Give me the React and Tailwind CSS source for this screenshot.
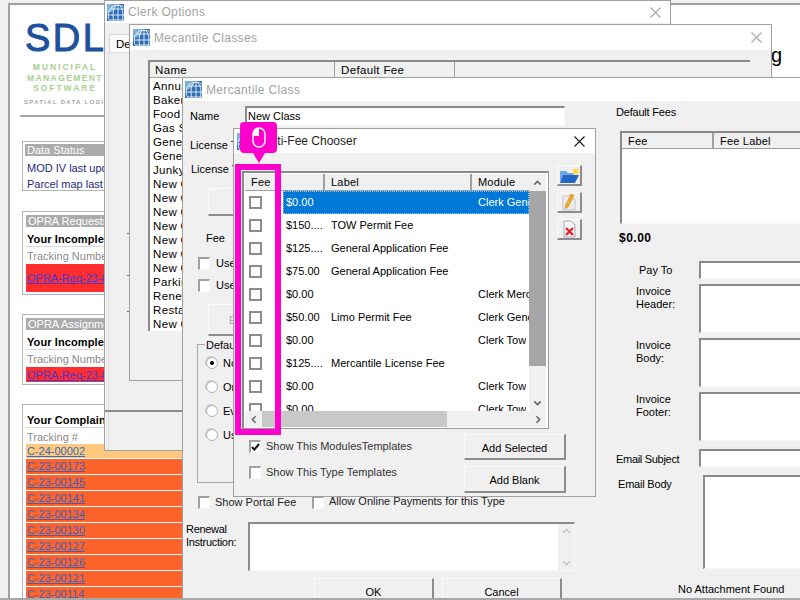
import React from "react";

const font = { fontFamily: '"Liberation Sans", Arial, sans-serif' };

const sunken = "border-t-2 border-l-2 border-t-[#8a8a8a] border-l-[#8a8a8a] border-r border-b border-r-[#f8f8f8] border-b-[#f8f8f8]";
const raised = "border-t border-l border-t-[#fafafa] border-l-[#fafafa] border-r-2 border-b-2 border-r-[#8c8c8c] border-b-[#8c8c8c] bg-[#f0f0f0]";

function Globe() {
  return (
    <svg width="17" height="17" viewBox="0 0 17 17" className="shrink-0">
      <rect width="17" height="17" fill="#2f6db5" />
      <path d="M0 17 L0 9 Q8 9 9 0 L0 0 Z" fill="#7fb0dc" />
      <g fill="none" stroke="#eaf3fb" strokeWidth="0.9">
        <circle cx="11" cy="11" r="10" />
        <ellipse cx="11" cy="11" rx="5" ry="10" />
        <path d="M1 11 H17 M3 5 H17 M3 16 H17 M11 1 V17" />
      </g>
    </svg>
  );
}

function CloseX({ color = "#a8a8a8" }) {
  return (
    <svg width="11" height="11" viewBox="0 0 11 11" className="shrink-0">
      <path d="M0.5 0.5 L10.5 10.5 M10.5 0.5 L0.5 10.5" stroke={color} strokeWidth="1.1" fill="none" />
    </svg>
  );
}

function TitleBar({ title, h, pr, pl = 3, noX, xColor, titleClass = "text-[#a3a3a3] tracking-[0.35px]" }) {
  return (
    <div className="flex items-center bg-white shrink-0" style={{ height: h, paddingRight: pr, paddingLeft: pl }}>
      <Globe />
      <span className={`ml-[4px] text-[12px] ${titleClass}`}>{title}</span>
      {!noX && <span className="ml-auto flex"><CloseX color={xColor} /></span>}
    </div>
  );
}

function Box({ checked, className = "" }) {
  return (
    <span className={`inline-flex items-center justify-center w-[12px] h-[13px] shrink-0 bg-white border-t-2 border-l-2 border-[#a0a0a0] border-r border-b border-r-[#f8f8f8] border-b-[#f8f8f8] ${className}`}>
      {checked && (
        <svg width="9" height="8" viewBox="0 0 9 8">
          <path d="M1 4 L3.4 6.6 L8 1" stroke="#111" strokeWidth="2" fill="none" />
        </svg>
      )}
    </span>
  );
}

function Radio({ on, label }) {
  return (
    <div className="flex items-center h-[24px]">
      <span className="w-[12px] h-[12px] rounded-full bg-white border border-[#b0b0b0] shadow-[-1px_-1px_0_#d0d0d0] flex items-center justify-center">
        {on && <span className="w-[4px] h-[4px] rounded-full bg-black" />}
      </span>
      <span className="ml-[5px]">{label}</span>
    </div>
  );
}

function Panel({ title, line, tracking, red, redH, className }) {
  return (
    <div className={`w-[300px] border border-[#b4b4b4] p-[3px] ${className}`}>
      <div className="bg-[#ababab] text-white h-[12px] leading-[12px] pl-[2px]">{title}</div>
      <div className="font-bold text-black h-[18px] mt-[2px] pl-[1px] border-b border-[#d8d8d8] leading-[20px] tracking-[0.1px]">{line}</div>
      <div className="text-[#8b8b8b] h-[17px] pl-[1px] leading-[18px]">{tracking}</div>
      <div className="bg-[#ff2d2d] flex items-center" style={{ height: redH }}>
        <span className="text-[#3c3cd8] underline leading-[14px] pl-[1px]">{red}</span>
      </div>
    </div>
  );
}

const complaints = ["C-23-00173", "C-23-00145", "C-23-00141", "C-23-00134", "C-23-00130", "C-23-00127", "C-23-00126", "C-23-00121", "C-23-00114"];

function LeftPage() {
  return (
    <div className="absolute left-[8px] top-[3px] w-[792px] h-[595px] bg-white border-t-2 border-l-2 border-[#a0a0a0] overflow-hidden">
      <div className="pl-[15px] pt-[14px] w-[200px]">
        <div className="text-[38px] leading-[38px] font-normal [-webkit-text-stroke:1px_#1c519e] text-[#1c519e] tracking-[2.5px] h-[38px] whitespace-nowrap">SDL</div>
        <div className="mt-[5px] flex flex-col items-center w-[80px] text-[8.5px] leading-[10.5px] text-[#a9d08f] font-bold tracking-[2px] whitespace-nowrap">
          <div>MUNICIPAL</div>
          <div className="tracking-[1.4px]">MANAGEMENT</div>
          <div>SOFTWARE</div>
        </div>
        <div className="mt-[4.5px] -ml-[1px] text-[6px] leading-[8px] text-[#a5a5a5] font-bold tracking-[1.3px] whitespace-nowrap">SPATIAL DATA LOGIC</div>
        <div className="mt-[9px] -ml-[5px] h-[2px] w-[150px] bg-[#a6a6a6]" />
      </div>
      <div className="pl-[12px] text-[11px]">
        <div className="mt-[24px] w-[300px] h-[50px] border border-[#b4b4b4] p-[2px] text-[#1c2a80]">
          <div className="bg-[#ababab] text-white h-[12px] leading-[12px] pl-[2px]">Data Status</div>
          <div className="mt-[4px] pl-[2px] leading-[16px]">MOD IV last updated</div>
          <div className="pl-[2px] leading-[16px]">Parcel map last updated</div>
        </div>
        <Panel className="mt-[20px] h-[84px]" title="OPRA Requests" line="Your Incomplete" tracking="Tracking Number" red="OPRA-Req-23-00" redH={28} />
        <Panel className="mt-[19px] h-[71px]" title="OPRA Assignments" line="Your Incomplete" tracking="Tracking Number" red="OPRA-Req-23-00" redH={15} />
        <div className="mt-[19px] w-[300px] border border-[#b4b4b4] px-[3px] pt-[6px]">
          <div className="font-bold text-black h-[17px] pl-[1px] border-b border-[#d8d8d8] leading-[18px] tracking-[0.1px]">Your Complaints</div>
          <div className="text-[#8b8b8b] h-[16px] pl-[1px] leading-[18px]">Tracking #</div>
          <div className="bg-[#ffc87c] h-[14px] leading-[14px] pl-[1px] text-[#2a6fc9] underline">C-24-00002</div>
          {complaints.map((c) => (
            <div key={c} className="bg-[#ff632c] h-[15px] mt-px leading-[15px] pl-[1px] text-[#3f5fb8] underline">{c}</div>
          ))}
        </div>
      </div>
      <div className="absolute right-[18px] top-[38px] text-[20px] leading-[24px] text-black">g</div>
    </div>
  );
}

function ClerkOptions() {
  return (
    <div className="absolute left-[104px] top-0 w-[567px] h-[451px] bg-[#f0f0f0] border border-[#a0a0a0] flex flex-col">
      <TitleBar title="Clerk Options" h={22} pr={9} pl={2} />
      <div className="ml-[4px] mt-[11px] w-[40px] h-[18px] bg-[#fafafa] border border-[#d8d8d8] border-b-0 pl-[6px] text-[11.5px] text-black leading-[18px] shrink-0">De</div>
      <div className="ml-[3px] flex-1 border-l border-t border-[#dcdcdc]">
        <div className="mt-[153px] ml-[18px] w-[3px] h-[28px] border-b border-b-[#707070]" />
        <div className="mt-[15px] ml-[18px] w-[3px] h-[27px] border-b border-b-[#707070]" />
        <div className="mt-[10px] ml-[18px] w-[3px] h-[26px] border-b border-b-[#707070]" />
        <div className="mt-[89px] -ml-[4px] h-[11px] w-[100px] border-b-2 border-b-[#8c8c8c]" />
      </div>
    </div>
  );
}

const classNames = ["Annual", "Bakery", "Food T", "Gas St", "General", "General", "Junkyard", "New C", "New C", "New C", "New C", "New C", "New C", "New C", "Parking", "Renew", "Restau", "New C"];

function MecantileClasses() {
  return (
    <div className="absolute left-[129px] top-[24px] w-[643px] h-[357px] bg-[#f0f0f0] border border-[#a0a0a0] flex flex-col">
      <TitleBar title="Mecantile Classes" h={25} pr={9} />
      <div className="ml-[18px] mt-[10px] w-[602px] h-[271px] bg-white border-t-2 border-l-2 border-[#8a8a8a] text-[11.5px] text-black">
        <div className="flex h-[16px] bg-[#f0f0f0] border-b border-[#a0a0a0] leading-[17px] tracking-[0.35px]">
          <div className="w-[185px] pl-[5px] border-r border-[#a0a0a0]">Name</div>
          <div className="w-[120px] pl-[6px] border-r border-[#a0a0a0]">Default Fee</div>
        </div>
        <div className="pl-[3px] pt-[1px] tracking-[0.35px]">
          {classNames.map((n, i) => (
            <div key={i} className="h-[14px] leading-[14px]">{n}</div>
          ))}
        </div>
      </div>
    </div>
  );
}

function FormRow({ label, h, mt, labelClass = "pl-[20px] w-[83px]" }) {
  return (
    <div className="flex" style={{ height: h, marginTop: mt }}>
      <div className={`${labelClass} shrink-0 leading-[13px] pt-[1px] whitespace-pre-line`}>{label}</div>
      <div className={`flex-1 bg-white ${sunken}`} />
    </div>
  );
}

function MercantileClass() {
  return (
    <div className="absolute left-[182px] top-[77px] w-[620px] h-[525px] bg-[#f0f0f0] border border-[#a0a0a0] flex flex-col text-[11px] text-black">
      <TitleBar title="Mercantile Class" h={23} pr={9} pl={2} noX />
      <div className="flex flex-1">
        {/* left column */}
        <div className="w-[433px] shrink-0 pl-[7px]">
          <div className="flex mt-[5px] h-[20px] items-center">
            <span className="w-[55px]">Name</span>
            <div className={`w-[320px] h-[20px] bg-white pl-[1px] leading-[16px] ${sunken}`}>New Class</div>
          </div>
          <div className="mt-[11px] h-[16px] leading-[16px]">License Type</div>
          <div className="mt-[8px] h-[16px] leading-[16px] pl-[1px]">License Year</div>
          <div className={`mt-[11px] ml-[18px] w-[120px] h-[28px] ${raised}`} />
          <div className="mt-[14px] h-[16px] leading-[16px] ml-[16px]">Fee</div>
          <div className="mt-[9px] h-[16px] flex items-center ml-[8px] gap-[6px]"><Box />Use Fee</div>
          <div className="mt-[6px] h-[16px] flex items-center ml-[8px] gap-[6px]"><Box />Use Fee</div>
          <div className={`mt-[11px] ml-[18px] w-[120px] h-[32px] pl-[20px] leading-[30px] text-[#a8a8a8] ${raised}`}>Edit</div>
          <div className="relative mt-[8px] ml-[7px] w-[380px] h-[139px] border border-[#a8a8a8] pl-[8px] pt-[6px]">
            <span className="absolute left-[7px] -top-[6px] bg-[#f0f0f0] px-px leading-[13px]">Default</span>
            <Radio on label="None" />
            <Radio label="Once" />
            <Radio label="Every" />
            <Radio label="Use" />
          </div>
          <div className="mt-[11px] h-[16px] flex items-center ml-[8px]">
            <Box /><span className="ml-[5px] w-[97px] text-[#222] whitespace-nowrap">Show Portal Fee</span>
            <Box /><span className="ml-[5px] text-[#222] -mt-[2px] whitespace-nowrap">Allow Online Payments for this Type</span>
          </div>
          <div className="mt-[12px] h-[49px] flex -ml-[4px]">
            <div className="w-[62px] pt-[1px] leading-[13px] tracking-[-0.3px]">Renewal<br />Instruction:</div>
            <div className={`w-[327px] bg-white flex ${sunken}`}>
              <div className="ml-auto w-[16px] bg-[#f0f0f0] flex flex-col items-center justify-between py-[4px]">
                <Chevron dir="up" color="#c8c8c8" />
                <Chevron dir="down" color="#c8c8c8" />
              </div>
            </div>
          </div>
          <div className="mt-[7px] flex ml-[124px] gap-[8px]">
            <div className={`w-[120px] h-[30px] text-center leading-[26px] ${raised}`}>OK</div>
            <div className={`w-[120px] h-[30px] text-center leading-[26px] ${raised}`}>Cancel</div>
          </div>
        </div>
        {/* right column */}
        <div className="flex-1 min-w-0">
          <div className="mt-[3px] h-[16px] leading-[16px] tracking-[-0.2px]">Default Fees</div>
          <div className={`mt-[11px] ml-[4px] h-[93px] bg-white ${sunken}`}>
            <div className="flex h-[16px] bg-[#f0f0f0] border-b border-[#9a9a9a] leading-[16px] tracking-[0.2px]">
              <div className="w-[92px] pl-[6px] border-r-2 border-[#a0a0a0]">Fee</div>
              <div className="pl-[6px]">Fee Label</div>
            </div>
          </div>
          <div className="mt-[6px] ml-[3px] h-[16px] leading-[16px] font-bold text-[12px] tracking-[0.5px]">$0.00</div>
          <FormRow label="Pay To" h={18} mt={15} labelClass="pl-[23px] w-[83px] leading-[16px]" />
          <FormRow label={"Invoice\nHeader:"} h={49} mt={5} />
          <FormRow label={"Invoice\nBody:"} h={49} mt={5} />
          <FormRow label={"Invoice\nFooter:"} h={49} mt={5} />
          <FormRow label="Email Subject" h={18} mt={8} labelClass="w-[83px] pt-[4px] tracking-[-0.3px]" />
          <FormRow label="Email Body" h={94} mt={8} labelClass="w-[87px] pl-[2px] pt-[3px] tracking-[-0.2px]" />
          <div className="mt-[12px] h-[16px] leading-[16px] ml-[62px] whitespace-nowrap">No Attachment Found</div>
        </div>
      </div>
    </div>
  );
}

function Chevron({ dir, color = "#666" }) {
  const d = dir === "up" ? "M1 5 L4.5 1.5 L8 5" : dir === "down" ? "M1 1.5 L4.5 5 L8 1.5" : dir === "left" ? "M5 1 L1.5 4.5 L5 8" : "M1.5 1 L5 4.5 L1.5 8";
  const vertical = dir === "up" || dir === "down";
  return (
    <svg width={vertical ? 9 : 6} height={vertical ? 6 : 9} viewBox={vertical ? "0 0 9 6.5" : "0 0 6.5 9"}>
      <path d={d} fill="none" stroke={color} strokeWidth="1.6" />
    </svg>
  );
}

const fees = [
  ["$0.00", "", "Clerk Gene"],
  ["$150....", "TOW Permit Fee", ""],
  ["$125....", "General Application Fee", ""],
  ["$75.00", "General Application Fee", ""],
  ["$0.00", "", "Clerk Merc"],
  ["$50.00", "Limo Permit Fee", "Clerk Gene"],
  ["$0.00", "", "Clerk Tow"],
  ["$125....", "Mercantile License Fee", ""],
  ["$0.00", "", "Clerk Tow"],
  ["$0.00", "", "Clerk Tow"],
];

function ToolButton({ children }) {
  return <div className={`w-[25px] h-[21px] flex items-center justify-center ${raised}`}>{children}</div>;
}

function FeeList() {
  return (
    <div className="w-[307px] h-[258px] border-t-2 border-l-2 border-[#8a8a8a] border-r border-b border-r-[#9a9a9a] border-b-[#9a9a9a] bg-white p-px flex flex-col">
      <div className="flex h-[237px] overflow-hidden">
        <div className="w-[284px] shrink-0 flex flex-col">
          <div className="flex h-[17px] shrink-0 bg-[#f0f0f0] border-b border-[#a0a0a0] leading-[17px] tracking-[0.2px]">
            <div className="w-[80px] shrink-0 pl-[6px] border-r-2 border-[#a0a0a0]">Fee</div>
            <div className="w-[147px] shrink-0 pl-[6px] border-r-2 border-[#a0a0a0]">Label</div>
            <div className="pl-[6px]">Module</div>
          </div>
          {fees.map((f, i) => (
            <div key={i} className="flex h-[23px] shrink-0 items-center">
              <div className="w-[38px] shrink-0 pl-[4px] flex">
                <span className="w-[13px] h-[13px] bg-white border-2 border-[#8c8c8c]" />
              </div>
              <div className={`flex flex-1 min-w-0 h-full items-center pl-[3px] ${i === 0 ? "bg-[#0078d7] text-white outline-1 -outline-offset-1 outline-dotted outline-[#8cc4f0]" : ""}`}>
                <span className="w-[45px] shrink-0 whitespace-nowrap">{f[0]}</span>
                <span className="w-[147px] shrink-0 whitespace-nowrap">{f[1]}</span>
                <span className="min-w-0 whitespace-nowrap overflow-hidden">{f[2]}</span>
              </div>
            </div>
          ))}
        </div>
        <div className="w-[17px] shrink-0 bg-[#f0f0f0] flex flex-col items-center">
          <div className="h-[17px] flex items-center justify-center shrink-0"><Chevron dir="up" /></div>
          <div className="w-full h-[175px] bg-[#a6a6a6] shrink-0" />
          <div className="flex-1 flex items-end pb-[5px]"><Chevron dir="down" /></div>
        </div>
      </div>
      <div className="flex h-[16px] bg-[#f0f0f0] items-center w-[301px]">
        <div className="w-[17px] flex justify-center shrink-0"><Chevron dir="left" /></div>
        <div className="w-[185px] h-full bg-[#c8c8c8] shrink-0" />
        <div className="ml-auto w-[17px] flex justify-center"><Chevron dir="right" /></div>
      </div>
    </div>
  );
}

function Chooser() {
  return (
    <div className="absolute left-[233px] top-[128px] w-[363px] h-[369px] bg-[#f0f0f0] border border-[#a0a0a0] flex flex-col text-[11px] text-black">
      <TitleBar title="Multi-Fee Chooser" h={24} pr={10} xColor="#1a1a1a" titleClass="text-[#222]" />
      <div className="flex pl-[8px] pt-[18px]">
        <FeeList />
        <div className="ml-[8px] -mt-[6px] flex flex-col gap-[6px]">
          <ToolButton>
            <svg width="21" height="17" viewBox="0 0 21 17">
              <path d="M1 4 H7 L9 6 H15 V8 H4 L1 15 Z" fill="#6ea6e6" />
              <path d="M4 8 H20 L16 16 H1 Z" fill="#2268c8" />
              <path d="M16 0 L17 2.5 L20 1.5 L18.5 4 L21 5.5 L18 6 L17.5 8.5 L15.5 6.5 L13 7 L14.5 4.5 L13 2 L15.5 2.5 Z" fill="#ffd83a" />
            </svg>
          </ToolButton>
          <ToolButton>
            <svg width="18" height="18" viewBox="0 0 18 18">
              <path d="M3 3 H11 L15 7 V17 H3 Z" fill="#ececec" stroke="#c4c4c4" />
              <path d="M11 1 L14 2.5 L8 14 L5.5 15.5 L5.5 12.5 Z" fill="#f4ad2a" stroke="#c77f12" strokeWidth="0.6" />
            </svg>
          </ToolButton>
          <ToolButton>
            <svg width="18" height="18" viewBox="0 0 18 18">
              <path d="M4 1 H11 L15 5 V17 H4 Z" fill="#f6f6f6" stroke="#a8a8b8" />
              <path d="M6 8 L13 15 M13 8 L6 15" stroke="#e8202a" strokeWidth="2.4" />
            </svg>
          </ToolButton>
        </div>
      </div>
      <div className="flex">
        <div className="pl-[15px] pt-[10px]">
          <div className="flex items-center h-[14px] gap-[5px] text-[#333]"><Box checked className="bg-[#e8e8e8]" />Show This ModulesTemplates</div>
          <div className="flex items-center h-[14px] gap-[5px] mt-[12px] text-[#333]"><Box />Show This Type Templates</div>
        </div>
        <div className="ml-auto mr-[29px] pt-[5px] flex flex-col gap-[6px]">
          <div className={`w-[102px] h-[26px] text-center leading-[26px] ${raised}`}>Add Selected</div>
          <div className={`w-[102px] h-[27px] text-center leading-[27px] ${raised}`}>Add Blank</div>
        </div>
      </div>
    </div>
  );
}

function Callout() {
  return (
    <>
      <div className="absolute left-[235px] top-[164px] w-[46px] h-[271px] border-[6px] border-[#ff00cc]" />
      <div className="absolute left-[240px] top-[122px] w-[37px] h-[31px] rounded-[4px] bg-[#ff00cc] flex items-center justify-center">
        <svg width="14" height="21" viewBox="0 0 14 21">
          <rect x="1" y="1" width="12" height="19" rx="6" fill="none" stroke="#fff" strokeWidth="1.5" />
          <path d="M1.5 9 H7 V1.5 A6 6 0 0 0 1.5 7 Z" fill="#fff" />
        </svg>
      </div>
      <div className="absolute left-[253px] top-[153px] w-0 h-0 border-l-[6px] border-r-[6px] border-t-[10px] border-l-transparent border-r-transparent border-t-[#ff00cc]" />
    </>
  );
}

export default function App() {
  return (
    <div style={font} className="relative w-[800px] h-[600px] overflow-hidden bg-[#f0f0f0]">
      <LeftPage />
      <ClerkOptions />
      <MecantileClasses />
      <MercantileClass />
      <Chooser />
      <Callout />
      <div className="absolute left-0 right-0 bottom-0 h-[2px] bg-[#a8a8a8]" />
    </div>
  );
}
